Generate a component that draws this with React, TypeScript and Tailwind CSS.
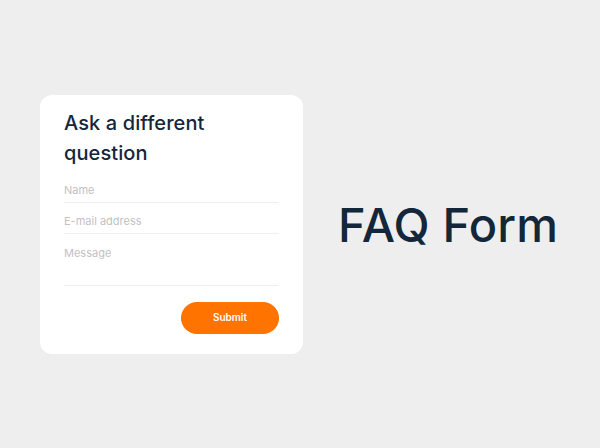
import React from "react";

export default function App() {
  const font = { fontFamily: "Inter, 'Noto Sans', sans-serif" };
  return (
    <div className="w-[600px] h-[448px] bg-[#eeeeee] flex items-center pl-[40px]" style={font}>
      <div className="w-[263px] h-[259px] bg-white rounded-[12px] pt-[13px] px-[24px] flex flex-col">
        <h2 className="text-[20px] leading-[30px] text-[#13263a] font-medium tracking-[0.1px]">
          Ask a different question
        </h2>
        <div className="flex flex-col">
          <div className="h-[35px] border-b border-[#efefef] pt-[15px] text-[11px] leading-[14px] text-[#c4bfc4]">Name</div>
          <div className="h-[31px] border-b border-[#efefef] pt-[11px] text-[11px] text-[#c4bfc4] leading-[14px]">E-mail address</div>
          <div className="h-[52px] border-b border-[#efefef] pt-[12px] text-[11px] text-[#c4bfc4] leading-[14px]">Message</div>
        </div>
        <div className="flex justify-end mt-[16px]">
          <button className="w-[98px] h-[32px] rounded-full bg-[#ff7300] text-white text-[10px] font-semibold">
            Submit
          </button>
        </div>
      </div>
      <div className="ml-[35px] text-[47px] text-[#13263a] font-medium leading-none tracking-[0.2px]">FAQ Form</div>
    </div>
  );
}
